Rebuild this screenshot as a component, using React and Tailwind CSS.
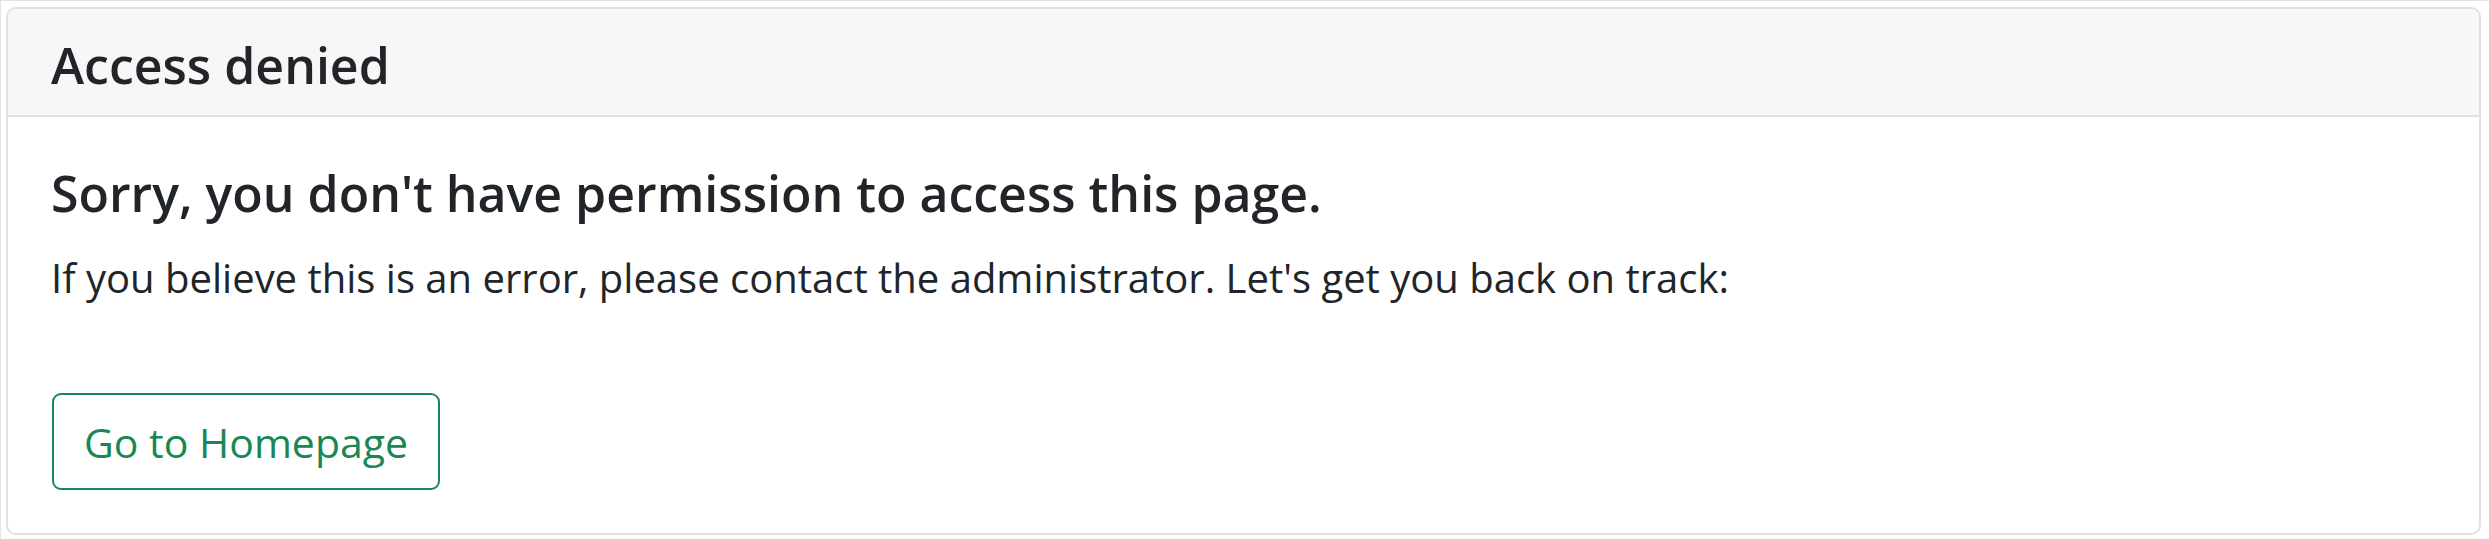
export default function App() {
  return (
    <div className="w-full h-[539px] bg-white border-t border-l border-[#e3e3e3] pt-[6px] pl-[5px] pr-[8px] font-['Open_Sans',sans-serif] text-[#212529]">
      <div className="border-2 border-[#e0e0e0] rounded-[10px] overflow-hidden bg-white">
        <div className="bg-[#f7f7f7] border-b-2 border-[#e0e0e0] px-[43px] pt-[26px] pb-[20px]">
          <h5 className="text-[50px] leading-[60px] font-semibold m-0">Access denied</h5>
        </div>
        <div className="px-[43px] pt-[46px] pb-[43px]">
          <h5 className="text-[50px] leading-[60px] font-semibold m-0">
            Sorry, you don't have permission to access this page.
          </h5>
          <p className="text-[40px] leading-[48px] mt-[31px]">
            If you believe this is an error, please contact the administrator. Let's get you back on track:
          </p>
          <a
            href="#"
            className="mt-[91px] ml-[1px] flex items-center justify-center w-[388px] h-[97px] border-2 border-[#198754] rounded-[9px] text-[#198754] text-[41px] leading-[48px]"
          >
            Go to Homepage
          </a>
        </div>
      </div>
    </div>
  );
}
